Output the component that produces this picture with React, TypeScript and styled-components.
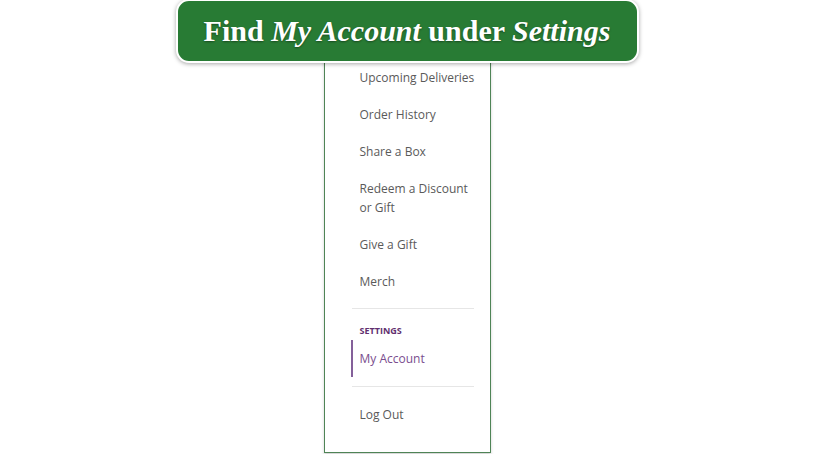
import React from "react";
import styled, { createGlobalStyle } from "styled-components";

const GlobalStyle = createGlobalStyle`
  html, body {
    margin: 0;
    padding: 0;
    background: #ffffff;
  }
`;

const Page = styled.div`
  width: 814px;
  height: 454px;
  display: flex;
  flex-direction: column;
  align-items: center;
  overflow: hidden;
`;

const Banner = styled.div`
  position: relative;
  z-index: 2;
  margin-top: -1px;
  height: 60px;
  width: 459px;
  display: flex;
  align-items: center;
  justify-content: center;
  background: #287b34;
  border: 2px solid #ffffff;
  border-radius: 13px;
  box-shadow: 0 1px 4px rgba(0, 0, 0, 0.35);
  color: #ffffff;
  font-family: "Liberation Serif", "DejaVu Serif", serif;
  font-size: 30px;
  font-weight: 700;
  text-shadow: 0 1px 2px rgba(0, 0, 0, 0.4);
  white-space: pre;
`;

const Em = styled.em`
  font-style: italic;
`;

const Panel = styled.nav`
  margin-top: -9px;
  width: 167px;
  height: 399px;
  padding-top: 5px;
  box-sizing: border-box;
  border: 1.5px solid #4f8456;
  border-top: none;
  background: #ffffff;
  box-shadow: 0 2px 3px rgba(0, 0, 0, 0.18);
  display: flex;
  flex-direction: column;
  font-family: "Open Sans", "Liberation Sans", sans-serif;
  font-size: 12px;
  line-height: 19px;
`;

const Item = styled.a<{ $active?: boolean }>`
  display: block;
  padding: 9px 6px 9px ${(p) => (p.$active ? "7px" : "35px")};
  margin-left: ${(p) => (p.$active ? "26px" : "0")};
  border-left: ${(p) => (p.$active ? "2px solid #84609a" : "none")};
  color: ${(p) => (p.$active ? "#7a4d8e" : "#5a5a5a")};
  text-decoration: none;
  white-space: pre-line;
`;

const Divider = styled.hr<{ $after?: number }>`
  margin: 8px 16px ${(p) => p.$after ?? 8}px 27px;
  border: none;
  border-top: 1px solid #e6e6e6;
`;

const SectionLabel = styled.div`
  padding: 8px 0 0 35px;
  font-size: 9px;
  font-weight: 700;
  line-height: 12px;
  color: #62306f;
`;

const ActiveWrap = styled.div`
  padding: 3px 0 1px 0;
`;

const items = [
  "Upcoming Deliveries",
  "Order History",
  "Share a Box",
  "Redeem a Discount\nor Gift",
  "Give a Gift",
  "Merch",
];

export default function App() {
  return (
    <Page>
      <GlobalStyle />
      <Banner>
        Find <Em>My Account</Em> under <Em>Settings</Em>
      </Banner>
      <Panel>
        {items.map((label) => (
          <Item key={label}>{label}</Item>
        ))}
        <Divider />
        <SectionLabel>SETTINGS</SectionLabel>
        <ActiveWrap>
          <Item $active>My Account</Item>
        </ActiveWrap>
        <Divider $after={9} />
        <Item>Log Out</Item>
      </Panel>
    </Page>
  );
}
